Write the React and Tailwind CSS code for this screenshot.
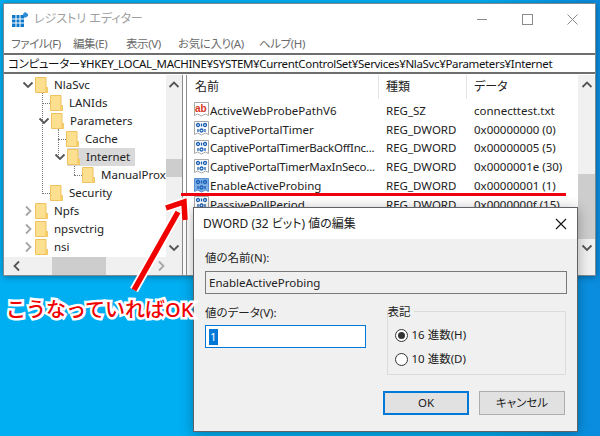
import React from 'react'

const treeRows = [
  { name: 'NlaSvc', pad: 'pl-[18px]', open: true },
  { name: 'LANIds', pad: 'pl-[45px]' },
  { name: 'Parameters', pad: 'pl-[34px]', open: true },
  { name: 'Cache', pad: 'pl-[61px]' },
  { name: 'Internet', pad: 'pl-[50px]', open: true, selected: true },
  { name: 'ManualProx', pad: 'pl-[77px]' },
  { name: 'Security', pad: 'pl-[45px]' },
  { name: 'Npfs', pad: 'pl-[18px]', closed: true },
  { name: 'npsvctrig', pad: 'pl-[18px]', closed: true },
  { name: 'nsi', pad: 'pl-[18px]', closed: true },
]

const valueRows = [
  { name: 'ActiveWebProbePathV6', type: 'REG_SZ', data: 'connecttest.txt', icon: 'ab' },
  { name: 'CaptivePortalTimer', type: 'REG_DWORD', data: '0x00000000 (0)' },
  { name: 'CaptivePortalTimerBackOffInc...', type: 'REG_DWORD', data: '0x00000005 (5)', long: true },
  { name: 'CaptivePortalTimerMaxInSeco...', type: 'REG_DWORD', data: '0x0000001e (30)', long: true },
  { name: 'EnableActiveProbing', type: 'REG_DWORD', data: '0x00000001 (1)', active: true },
  { name: 'PassivePollPeriod', type: 'REG_DWORD', data: '0x0000000f (15)' },
]

const Chevron = ({ dir }) => {
  const paths = {
    down: 'M1.5 3.5 L6 8 L10.5 3.5',
    up: 'M1.5 8 L6 3.5 L10.5 8',
    right: 'M4 1.5 L8.5 6 L4 10.5',
    left: 'M8 1.5 L3.5 6 L8 10.5',
  }
  return (
    <svg width="12" height="12" viewBox="0 0 12 12" className="shrink-0">
      <path d={paths[dir]} fill="none" stroke={dir === 'right' ? '#a6a6a6' : '#555'} strokeWidth="1.8" />
    </svg>
  )
}

const Folder = () => (
  <svg width="13" height="16" viewBox="0 0 13 16" className="shrink-0">
    <path d="M.5.5h10.5v10h1.500v5H.5z" fill="#fde08f" stroke="#eec35f" />
    <path d="M10 11h2.500v4.500H10z" fill="#f6cf6c" />
  </svg>
)

const BinaryIcon = ({ active }) => (
  <svg width="15" height="16" viewBox="0 0 15 16" className="shrink-0">
    <path d="M.5.5h14v13l-3-1.500-4 2-4-2-3 1.500z" fill={active ? '#7fb0e6' : '#fff'} stroke={active ? '#5b8fcf' : '#a9a9a9'} />
    <g fill="none" stroke="#1a5fb4" strokeWidth="1.300">
      <circle cx="4" cy="4" r="1.500" />
      <path d="M7.500 2.500v3" />
      <circle cx="11" cy="4" r="1.500" />
      <path d="M4 8v3" />
      <circle cx="7.500" cy="9.500" r="1.500" />
      <path d="M11 8v3" />
    </g>
  </svg>
)

const TextIcon = () => (
  <svg width="15" height="16" viewBox="0 0 15 16" className="shrink-0">
    <path d="M.5.5h14v13l-3-1.500-4 2-4-2-3 1.500z" fill="#fff" stroke="#a9a9a9" />
    <text x="1" y="10" fontSize="10" fontWeight="700" fill="#d8341c" fontFamily="Liberation Sans">ab</text>
  </svg>
)

const Radio = ({ checked }) => (
  <span className="w-[13px] h-[13px] rounded-full border border-[#333] bg-white flex items-center justify-center shrink-0">
    {checked && <span className="w-[7px] h-[7px] rounded-full bg-[#333]" />}
  </span>
)

const TreePane = () => (
  <div className="w-[179px] h-full border-r border-[#8c8c8c] flex flex-col">
    <div className="flex flex-1">
      <div className="relative flex-1 pt-px">
        <span className="absolute left-[38px] top-[18px] h-[101px] border-l border-dotted border-[#777]" />
        <span className="absolute left-[54px] top-[54px] h-[28px] border-l border-dotted border-[#777]" />
        <span className="absolute left-[70px] top-[90px] h-[10px] border-l border-dotted border-[#777]" />
        <span className="absolute left-[38px] top-[28px] w-[8px] border-t border-dotted border-[#777]" />
        <span className="absolute left-[54px] top-[64px] w-[8px] border-t border-dotted border-[#777]" />
        <span className="absolute left-[70px] top-[100px] w-[8px] border-t border-dotted border-[#777]" />
        <span className="absolute left-[38px] top-[118px] w-[8px] border-t border-dotted border-[#777]" />
        {treeRows.map((row) => (
          <div key={row.name} className={`relative h-[18px] flex items-center ${row.pad}`}>
            {row.open && <Chevron dir="down" />}
            {row.closed && <Chevron dir="right" />}
            <div className={`flex items-center h-[18px] ml-[1px] ${row.selected ? 'bg-[#d9d9d9] pr-[5px]' : ''}`}>
              <Folder />
              <span className="ml-[6px] text-[11.5px] leading-[18px] text-[#222] whitespace-nowrap">{row.name}</span>
            </div>
          </div>
        ))}
      </div>
      <div className="w-[17px] bg-[#f0f0f0] flex flex-col items-center">
        <div className="h-[19px] flex items-center"><Chevron dir="up" /></div>
        <div className="h-[65px]" />
        <div className="w-full h-[18px] bg-[#cdcdcd]" />
        <div className="flex-1" />
        <div className="h-[18px] flex items-center"><Chevron dir="down" /></div>
      </div>
    </div>
    <div className="h-[18px] bg-[#f0f0f0] flex items-center pl-[7px]">
      <Chevron dir="left" />
      <div className="ml-[29px] w-[54px] h-full bg-[#cdcdcd]" />
      <div className="ml-[49px]"><Chevron dir="right" /></div>
    </div>
  </div>
)

const ValuesPane = () => (
  <div className="flex-1 h-full border-l border-[#8c8c8c] flex ml-[3px] relative">
    <div className="flex-1 flex flex-col">
      <div className="h-[26px] flex items-center text-[12px] text-[#222] pb-[2px]">
        <div className="w-[192px] h-full pl-[8px] flex items-center border-r border-[#e5e5e5]">名前</div>
        <div className="w-[88px] h-full pl-[7px] flex items-center border-r border-[#e5e5e5]">種類</div>
        <div className="pl-[7px]">データ</div>
      </div>
      {valueRows.map((row) => (
        <div key={row.name} className="h-[18.8px] flex items-center text-[11.5px] text-[#222] whitespace-nowrap">
          <div className="w-[192px] pl-[7px] flex items-center overflow-hidden">
            {row.icon === 'ab' ? <TextIcon /> : <BinaryIcon active={row.active} />}
            <span className={row.long ? 'ml-[1px] tracking-[-0.25px]' : 'ml-[1px]'}>{row.name}</span>
          </div>
          <div className="w-[88px] pl-[7px]">{row.type}</div>
          <div className="pl-[7px]">{row.data}</div>
        </div>
      ))}
    </div>
    <div className="w-[17px] h-full bg-[#f0f0f0] flex flex-col items-center">
      <div className="h-[19px] flex items-center"><Chevron dir="up" /></div>
      <div className="h-[80px]" />
      <div className="w-full flex-1 bg-[#cdcdcd]" />
      <div className="h-[18px] flex items-center"><Chevron dir="down" /></div>
      <div className="h-[18px]" />
    </div>
  </div>
)

const Dialog = () => (
  <div className="absolute left-[193px] top-[207px] w-[385px] h-[225px] border border-[#5f6368] bg-[#f0f0f0] flex flex-col shadow-[0_2px_12px_rgba(0,0,0,0.3)] text-[11.5px] text-[#222]">
    <div className="h-[31px] bg-white flex items-center justify-between pl-[9px] pr-[10px] text-[12px]">
      <span>DWORD (32 ビット) 値の編集</span>
      <svg width="12" height="12" viewBox="0 0 12 12">
        <path d="M1 1l10 10M11 1L1 11" stroke="#111" strokeWidth="1.100" />
      </svg>
    </div>
    <div className="flex-1 px-[11px] pt-[10px]">
      <div className="leading-[18px]">値の名前(N):</div>
      <div className="mt-[4px] h-[23px] w-[362px] border border-[#7a7a7a] bg-[#f0f0f0] flex items-center pl-[3px]">EnableActiveProbing</div>
      <div className="flex mt-[9px]">
        <div className="w-[161px]">
          <div className="leading-[18px] mt-[1px]">値のデータ(V):</div>
          <div className="mt-[3px] h-[23px] border border-[#0078d7] bg-white flex items-center pl-[3px]">
            <span className="bg-[#0078d7] text-white px-[1px] leading-[16px]">1</span>
          </div>
        </div>
        <div className="relative ml-[21px] mt-[8px] w-[180px] h-[64px] border border-[#dcdcdc] flex flex-col gap-[10px] pl-[7px] pt-[16px]">
          <span className="absolute left-0 top-[-9px] bg-[#f0f0f0] pr-[3px] leading-[18px]">表記</span>
          <div className="flex items-center gap-[4px] h-[14px]"><Radio checked /><span>16 進数(H)</span></div>
          <div className="flex items-center gap-[4px] h-[14px]"><Radio /><span>10 進数(D)</span></div>
        </div>
      </div>
      <div className="flex justify-end gap-[10px] mt-[16px] mr-[1px]">
        <button className="w-[86px] h-[24px] bg-[#e1e1e1] border-2 border-[#0078d7]">OK</button>
        <button className="w-[86px] h-[24px] bg-[#e1e1e1] border border-[#adadad]">キャンセル</button>
      </div>
    </div>
  </div>
)

const App = () => {
  return (
    <div className="relative w-[600px] h-[436px] overflow-hidden bg-gradient-to-r from-[#00aef2] from-80% to-[#0b8bdd] font-['Noto_Sans','Noto_Sans_CJK_JP',sans-serif] [font-feature-settings:'palt']">
      <div className="absolute left-[3px] top-[3px] w-[593px] h-[273px] bg-white border border-[#7d8a94] flex flex-col shadow-[0_1px_6px_rgba(0,0,0,0.35)]">
        <div className="h-[30px] flex items-center pl-[8px] shrink-0">
          <svg width="16" height="15" viewBox="0 0 16 15" className="shrink-0">
            <path d="M0 3h12v12H0z" fill="#0f78c8" />
            <path d="M4 3v12M8 3v12M0 7h12M0 11h12" stroke="#fff" strokeWidth="1" />
            <path d="M13 0l3 2v2l-3 2-2-2V2z" fill="#2d8fd8" />
          </svg>
          <span className="ml-[6px] text-[12px] text-[#a0a0a0]">レジストリ エディター</span>
          <div className="ml-auto flex items-center">
            <span className="w-[10px] border-t border-[#8a8a8a] mr-[35px]" />
            <span className="w-[11px] h-[11px] border border-[#8a8a8a] mr-[34px]" />
            <svg width="11" height="11" viewBox="0 0 11 11" className="mr-[17px]">
              <path d="M.5.5l10 10M10.500.5l-10 10" stroke="#8a8a8a" strokeWidth="1" />
            </svg>
          </div>
        </div>
        <div className="h-[19px] flex items-center pl-[7px] text-[11.5px] text-[#6b6b6b] whitespace-nowrap tracking-[-0.4px] shrink-0">
          <span className="w-[62px]">ファイル(F)</span>
          <span className="w-[53px]">編集(E)</span>
          <span className="w-[52px]">表示(V)</span>
          <span className="w-[81px]">お気に入り(A)</span>
          <span>ヘルプ(H)</span>
        </div>
        <div className="h-[21px] border-y-2 border-[#6e6e6e] flex items-center pl-[4px] text-[11.5px] text-[#111] whitespace-nowrap tracking-[-0.34px] shrink-0">
          コンピューター¥HKEY_LOCAL_MACHINE¥SYSTEM¥CurrentControlSet¥Services¥NlaSvc¥Parameters¥Internet
        </div>
        <div className="flex-1 flex pt-px min-h-0">
          <TreePane />
          <ValuesPane />
        </div>
      </div>

      <Dialog />

      {/* red line and arrow drawn on top of the screenshot */}
      <div className="absolute left-[181px] top-[193px] w-[385px] h-[3px] bg-[#ee0011]" />
      <svg className="absolute left-0 top-0" width="600" height="436" viewBox="0 0 600 436">
        <g fill="none" strokeLinejoin="miter">
          <path d="M134 290L178 212M166 208L184 202L185 220" stroke="#fff" strokeWidth="9" />
          <path d="M134 290L178 212M166 208L184 202L185 220" stroke="#f10000" strokeWidth="5.500" />
        </g>
      </svg>
      <div className="absolute left-[6px] top-[297px] text-[20px] leading-[26px] font-medium text-[#f00000] whitespace-nowrap [font-feature-settings:normal] [-webkit-text-stroke:5px_#fff] [paint-order:stroke_fill]">
        こうなっていればOK
      </div>
    </div>
  )
}

export default App
